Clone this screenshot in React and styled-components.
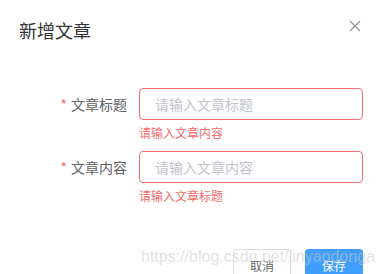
import React from 'react';
import styled, { createGlobalStyle } from 'styled-components';

const GlobalStyle = createGlobalStyle`
  html, body {
    margin: 0;
    padding: 0;
    background: #fff;
  }
  * {
    box-sizing: border-box;
  }
`;

const CJK = `"Noto Sans CJK SC", "Microsoft YaHei", sans-serif`;

const Dialog = styled.div`
  position: relative;
  width: 382px;
  height: 274px;
  overflow: hidden;
  background: #fff;
  font-family: ${CJK};
`;

const Header = styled.div`
  display: flex;
  justify-content: space-between;
  align-items: flex-start;
  padding: 18px 21px 0 19px;
`;

const Title = styled.span`
  font-size: 18px;
  line-height: 24px;
  color: #303133;
`;

const CloseButton = styled.button`
  margin-top: 2px;
  width: 12px;
  height: 12px;
  padding: 0;
  border: 0;
  background: none;
  color: #909399;
  cursor: pointer;
  display: flex;
`;

const Form = styled.form`
  padding: 46px 19px 0 19px;
`;

const FormItem = styled.div`
  position: relative;
  display: flex;
  align-items: center;
  height: 32px;
  margin-bottom: 31px;
`;

const Label = styled.label`
  width: 120px;
  padding-right: 12px;
  text-align: right;
  font-size: 14px;
  color: #606266;

  &::before {
    content: '*';
    color: #f56c6c;
    margin-right: 4px;
  }
`;

const Field = styled.div`
  position: relative;
  flex: 1;
  height: 32px;
`;

const Input = styled.input`
  width: 100%;
  height: 32px;
  padding: 0 15px;
  border: 1px solid ${({ $invalid }) => ($invalid ? '#f56c6c' : '#dcdfe6')};
  border-radius: 4px;
  font-family: ${CJK};
  font-size: 14px;
  color: #606266;
  outline: none;

  &::placeholder {
    color: #c0c4cc;
  }
`;

const Error = styled.div`
  position: absolute;
  left: 0;
  top: 100%;
  padding-top: 6px;
  font-size: 12px;
  line-height: 13px;
  color: #f56c6c;
`;

const Footer = styled.div`
  display: flex;
  justify-content: flex-end;
  gap: 14px;
  padding: 35px 19px 0 0;
`;

const Button = styled.button`
  height: 32px;
  padding: 0 16px;
  border-radius: 3px;
  font-family: ${CJK};
  font-size: 12px;
  cursor: pointer;
  border: 1px solid ${({ $primary }) => ($primary ? '#409eff' : '#dcdfe6')};
  background: ${({ $primary }) => ($primary ? '#409eff' : '#fff')};
  color: ${({ $primary }) => ($primary ? '#fff' : '#606266')};
`;

const Watermark = styled.div`
  position: absolute;
  left: 141px;
  top: 249px;
  font-family: "Liberation Sans", Arial, sans-serif;
  font-size: 16px;
  line-height: 16px;
  color: rgba(200, 200, 200, 0.55);
  pointer-events: none;
  white-space: nowrap;
`;

const fields = [
  { label: '文章标题', placeholder: '请输入文章标题', error: '请输入文章内容' },
  { label: '文章内容', placeholder: '请输入文章内容', error: '请输入文章标题' },
];

export default function App() {
  return (
    <>
      <GlobalStyle />
      <Dialog>
        <Header>
          <Title>新增文章</Title>
          <CloseButton aria-label="关闭">
            <svg width="12" height="12" viewBox="0 0 12 12">
              <path d="M1 1L11 11M11 1L1 11" stroke="currentColor" strokeWidth="1.2" />
            </svg>
          </CloseButton>
        </Header>
        <Form onSubmit={(e) => e.preventDefault()}>
          {fields.map((f) => (
            <FormItem key={f.label}>
              <Label>{f.label}</Label>
              <Field>
                <Input $invalid placeholder={f.placeholder} />
                <Error>{f.error}</Error>
              </Field>
            </FormItem>
          ))}
        </Form>
        <Footer>
          <Button>取消</Button>
          <Button $primary>保存</Button>
        </Footer>
        <Watermark>https://blog.csdn.net/linyaodonga</Watermark>
      </Dialog>
    </>
  );
}
